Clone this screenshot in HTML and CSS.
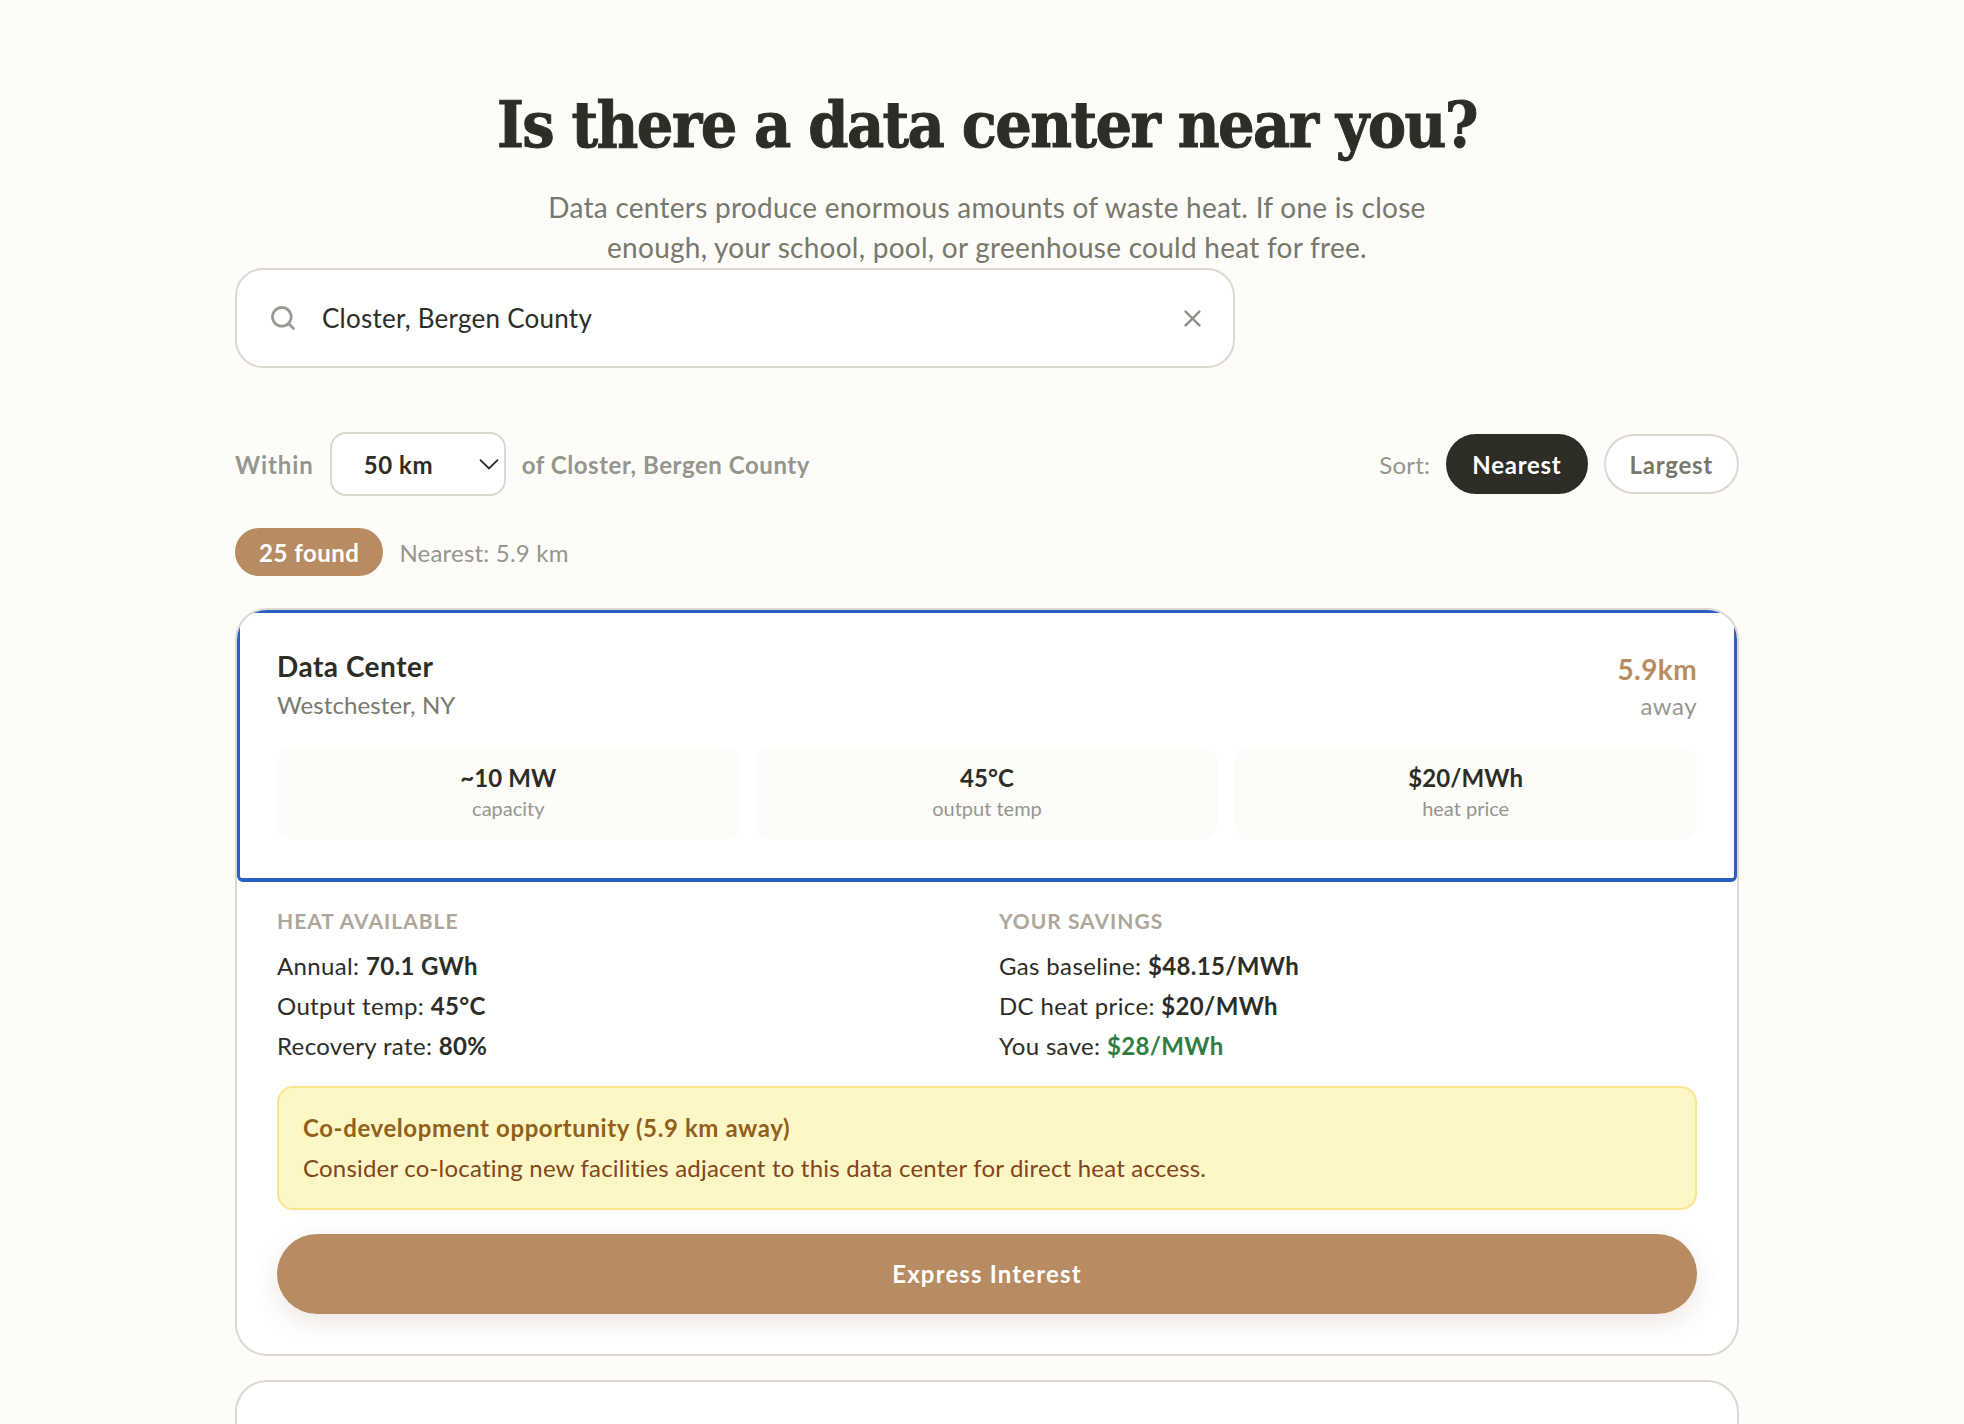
FILE: index.html
```html
<!DOCTYPE html>
<html lang="en">
<head>
<meta charset="utf-8">
<title>Is there a data center near you?</title>
<link rel="stylesheet" href="styles.css">
</head>
<body>
<main class="page">
  <header class="hero">
    <h1>Is there a data center near you?</h1>
    <p>Data centers produce enormous amounts of waste heat. If one is close<br>enough, your school, pool, or greenhouse could heat for free.</p>
  </header>
  <div class="search">
    <svg class="search-icon" viewBox="0 0 24 24" fill="none" stroke="currentColor" stroke-width="2.4" stroke-linecap="round"><circle cx="11" cy="11" r="8"/><path d="M21 21l-4.3-4.3"/></svg>
    <span class="search-text">Closter, Bergen County</span>
    <svg class="clear-icon" viewBox="0 0 16 16" fill="none" stroke="currentColor" stroke-width="2.2" stroke-linecap="round"><path d="M1.5 1.5l13 13M14.5 1.5l-13 13"/></svg>
  </div>
  <div class="filters">
    <div class="within">
      <span class="within-label">Within</span>
      <div class="select"><span>50 km</span><svg viewBox="0 0 16 16" fill="none" stroke="currentColor" stroke-width="1.5"><path d="M0.8 4.5L8 11.5l7.2-7"/></svg></div>
      <span>of Closter, Bergen County</span>
    </div>
    <div class="sort">
      <span class="sort-label">Sort:</span>
      <span class="pill pill-active">Nearest</span>
      <span class="pill">Largest</span>
    </div>
  </div>
  <div class="summary">
    <span class="badge">25 found</span>
    <span class="nearest">Nearest: 5.9 km</span>
  </div>
  <article class="card">
    <div class="card-head">
      <div class="head-row">
        <div>
          <h2>Data Center</h2>
          <div class="place">Westchester, NY</div>
        </div>
        <div class="dist">
          <div class="dist-num">5.9km</div>
          <div class="dist-label">away</div>
        </div>
      </div>
      <div class="stats">
        <div class="stat"><strong>~10 MW</strong><span>capacity</span></div>
        <div class="stat"><strong>45°C</strong><span>output temp</span></div>
        <div class="stat"><strong>$20/MWh</strong><span>heat price</span></div>
      </div>
    </div>
    <div class="card-body">
      <div class="cols">
        <div>
          <h3>HEAT AVAILABLE</h3>
          <p>Annual: <b>70.1 GWh</b></p>
          <p>Output temp: <b>45°C</b></p>
          <p>Recovery rate: <b>80%</b></p>
        </div>
        <div>
          <h3>YOUR SAVINGS</h3>
          <p>Gas baseline: <b>$48.15/MWh</b></p>
          <p>DC heat price: <b>$20/MWh</b></p>
          <p>You save: <b class="save">$28/MWh</b></p>
        </div>
      </div>
      <div class="alert">
        <div class="alert-title">Co-development opportunity (5.9 km away)</div>
        <div class="alert-text">Consider co-locating new facilities adjacent to this data center for direct heat access.</div>
      </div>
      <div class="cta">Express Interest</div>
    </div>
  </article>
  <article class="card card-next"></article>
</main>
</body>
</html>
```
FILE: styles.css
```css
* { box-sizing: border-box; }
html, body { margin: 0; height: 100%; overflow: hidden; }
body {
  background: #fdfcf9;
  color: #2d2d26;
  font-family: "Lato", "Noto Sans", sans-serif;
  font-size: 24px;
}
.page { width: 1504px; margin-left: 235px; padding-top: 81px; }
.hero { text-align: center; }
.hero h1 {
  margin: 0;
  font-family: "DejaVu Serif Condensed", "Liberation Serif", serif;
  font-weight: 700;
  font-size: 64px;
  line-height: 88px;
  letter-spacing: -1.6px;
  -webkit-text-stroke: 0.9px #2d2d26;
  color: #2d2d26;
}
.hero p {
  margin: 18px 0 0;
  font-size: 28px;
  line-height: 40px;
  letter-spacing: 0.26px;
  color: #78786c;
}
.search {
  width: 1000px;
  height: 100px;
  margin-top: 1px;
  padding: 0 32px;
  display: flex;
  align-items: center;
  background: #fff;
  border: 2px solid #ddd8cf;
  border-radius: 28px;
}
.search-icon { width: 28px; height: 28px; color: #9a9a94; flex: none; }
.search-text { flex: 1; margin-left: 25px; font-size: 26px; letter-spacing: 0.25px; }
.clear-icon { width: 17px; height: 17px; color: #8f8f89; flex: none; }
.filters { margin-top: 64px; display: flex; justify-content: space-between; align-items: center; }
.within { display: flex; align-items: center; gap: 16px; color: #96968e; font-weight: 700; letter-spacing: 0.55px; }
.within-label { letter-spacing: 0.9px; }
.select {
  width: 176px; height: 64px;
  padding: 0 5px 0 32px;
  display: flex; align-items: center; justify-content: space-between;
  background: #fff;
  border: 2px solid #ddd8cf;
  border-radius: 16px;
  color: #2d2d26;
}
.select svg { width: 20px; height: 20px; color: #2d2d26; }
.sort { display: flex; align-items: center; gap: 16px; }
.sort-label { color: #96968e; letter-spacing: 0.2px; }
.pill {
  height: 60px; padding: 0 24px;
  display: flex; align-items: center;
  border: 2px solid #ddd8cf;
  border-radius: 30px;
  background: #fff;
  color: #78786c;
  font-weight: 700;
  letter-spacing: 0.75px;
}
.pill-active { background: #2d2d26; border-color: #2d2d26; color: #fff; }
.summary { margin-top: 32px; display: flex; align-items: center; gap: 16px; }
.badge {
  height: 48px; padding: 0 24px;
  display: flex; align-items: center;
  background: #b88c62; color: #fff;
  border-radius: 24px; font-weight: 700;
  letter-spacing: 0.5px;
}
.nearest { color: #96968e; letter-spacing: 0.2px; }
.card {
  margin-top: 32px;
  background: #fff;
  border: 2px solid #ddd8cf;
  border-radius: 32px;
  overflow: hidden;
}
.card-head { padding: 32px 37px 38px; border: 3px solid #2b5fc4; border-bottom-width: 4px; border-radius: 0 0 6px 6px; }
.head-row { display: flex; justify-content: space-between; }
.card-head h2 { margin: 0; font-size: 28px; line-height: 42px; font-weight: 700; letter-spacing: 0.5px; }
.place { color: #78786c; line-height: 36px; letter-spacing: 0.1px; }
.dist { text-align: right; margin-top: 5px; }
.dist-num { color: #b88c62; font-size: 28px; font-weight: 700; line-height: 38px; letter-spacing: 0.4px; }
.dist-label { color: #96968e; line-height: 36px; letter-spacing: 0.5px; }
.stats { margin-top: 23px; display: grid; grid-template-columns: repeat(3, 1fr); gap: 16px; }
.stat {
  height: 93px;
  padding-bottom: 4px;
  display: flex; flex-direction: column; align-items: center; justify-content: center;
  background: #fdfcf9;
  border-radius: 16px;
}
.stat strong { font-size: 24px; line-height: 32px; letter-spacing: 0.1px; }
.stat span { font-size: 20px; line-height: 28px; color: #96968e; }
.card-body { padding: 24px 40px 40px; }
.cols { display: grid; grid-template-columns: 1fr 1fr; column-gap: 24px; }
.cols h3 { margin: 1px 0 11px; font-size: 21px; line-height: 28px; font-weight: 700; letter-spacing: 1px; color: #aea699; }
.cols p { margin: 0; line-height: 40px; letter-spacing: 0.35px; }
.cols b { letter-spacing: 0.35px; }
.save { color: #2f7d42; }
.alert {
  margin-top: 20px; height: 124px; padding: 0 24px;
  display: flex; flex-direction: column; justify-content: center;
  background: #fdf7c6;
  border: 2px solid #fce58c;
  border-radius: 16px;
}
.alert-title { color: #935f1c; font-weight: 700; line-height: 40px; letter-spacing: 0.6px; }
.alert-text { color: #84451a; line-height: 40px; letter-spacing: 0.2px; }
.cta {
  margin-top: 24px; height: 80px;
  padding-bottom: 2px;
  display: flex; align-items: center; justify-content: center;
  background: #b88c62; color: #fff; font-weight: 700;
  letter-spacing: 1.15px;
  border-radius: 40px;
  box-shadow: 0 8px 24px rgba(120, 80, 50, 0.14);
}
.card-next { margin-top: 24px; height: 200px; }
```
